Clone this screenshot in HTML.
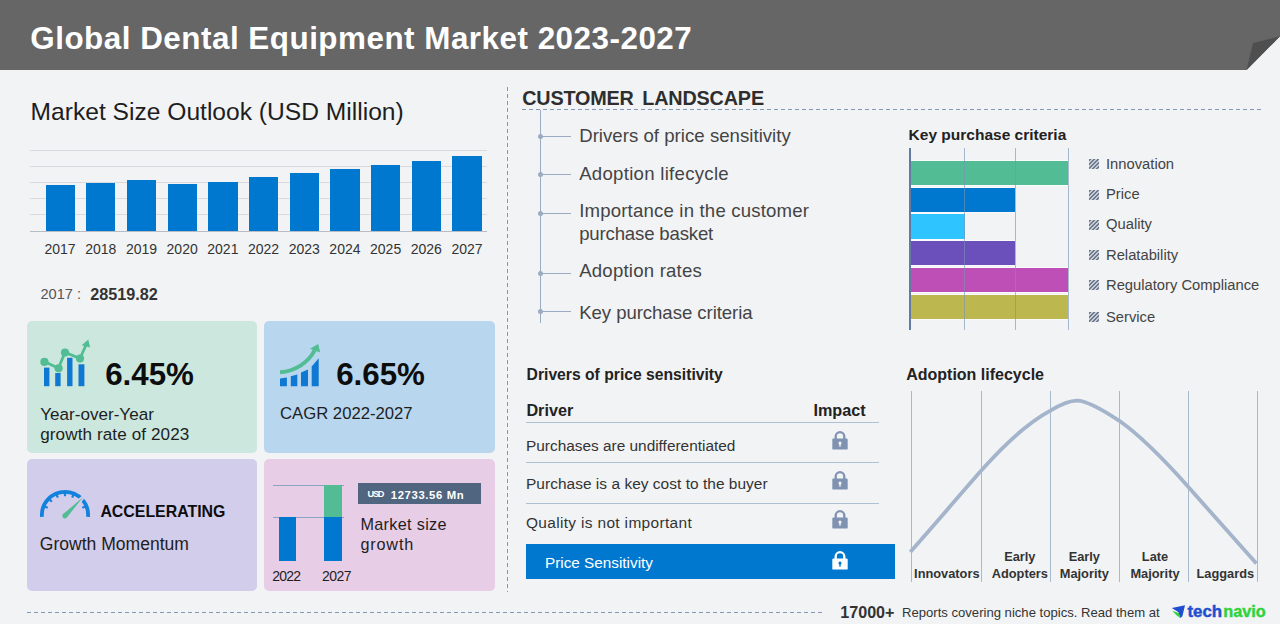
<!DOCTYPE html>
<html lang="en"><head><meta charset="utf-8"><title>Global Dental Equipment Market 2023-2027</title>
<style>
html,body{margin:0;padding:0;}
body{width:1280px;height:624px;position:relative;overflow:hidden;background:#f2f3f5;font-family:"Liberation Sans", sans-serif;}
.t{position:absolute;white-space:nowrap;font-family:"Liberation Sans", sans-serif;}
.r{position:absolute;display:block;}
.hatch{background:repeating-linear-gradient(135deg,#6f7b8c 0,#6f7b8c 1.45px,#c6ccd5 1.45px,#c6ccd5 2.9px);}
</style></head><body>
<div class="r" style="left:0;top:0;width:1280px;height:70px;background:#666666;clip-path:polygon(0 0,1280px 0,1280px 36.3px,1246.6px 70px,0 70px);"></div>
<svg class="r" style="left:1240px;top:30px" width="40" height="40" viewBox="1240 30 40 40"><polygon points="1246.6,70 1253,43 1280,36.3" fill="#4f4f4f"/></svg>
<div class="t" style="left:30.30px;top:23.02px;font-size:31.4px;line-height:31.4px;color:#ffffff;font-weight:bold;letter-spacing:0.5px;">Global Dental Equipment Market 2023-2027</div>
<div class="t" style="left:30.60px;top:99.78px;font-size:24.6px;line-height:24.6px;color:#1e1e1e;">Market Size Outlook (USD Million)</div>
<div class="r" style="left:30.00px;top:150.00px;width:457.00px;height:1.00px;background:#d9dadd;"></div>
<div class="r" style="left:30.00px;top:165.70px;width:457.00px;height:1.00px;background:#d9dadd;"></div>
<div class="r" style="left:30.00px;top:181.50px;width:457.00px;height:1.00px;background:#d9dadd;"></div>
<div class="r" style="left:30.00px;top:197.60px;width:457.00px;height:1.00px;background:#d9dadd;"></div>
<div class="r" style="left:30.00px;top:213.70px;width:457.00px;height:1.00px;background:#d9dadd;"></div>
<div class="r" style="left:45.50px;top:185.00px;width:29.30px;height:46.00px;background:#0078d0;"></div>
<div class="t" style="left:60.10px;top:241.55px;font-size:14px;line-height:14px;color:#333;transform:translateX(-50%);">2017</div>
<div class="r" style="left:86.19px;top:183.10px;width:29.30px;height:47.90px;background:#0078d0;"></div>
<div class="t" style="left:100.79px;top:241.55px;font-size:14px;line-height:14px;color:#333;transform:translateX(-50%);">2018</div>
<div class="r" style="left:126.88px;top:180.10px;width:29.30px;height:50.90px;background:#0078d0;"></div>
<div class="t" style="left:141.48px;top:241.55px;font-size:14px;line-height:14px;color:#333;transform:translateX(-50%);">2019</div>
<div class="r" style="left:167.57px;top:184.20px;width:29.30px;height:46.80px;background:#0078d0;"></div>
<div class="t" style="left:182.17px;top:241.55px;font-size:14px;line-height:14px;color:#333;transform:translateX(-50%);">2020</div>
<div class="r" style="left:208.26px;top:181.60px;width:29.30px;height:49.40px;background:#0078d0;"></div>
<div class="t" style="left:222.86px;top:241.55px;font-size:14px;line-height:14px;color:#333;transform:translateX(-50%);">2021</div>
<div class="r" style="left:248.95px;top:176.70px;width:29.30px;height:54.30px;background:#0078d0;"></div>
<div class="t" style="left:263.55px;top:241.55px;font-size:14px;line-height:14px;color:#333;transform:translateX(-50%);">2022</div>
<div class="r" style="left:289.64px;top:173.40px;width:29.30px;height:57.60px;background:#0078d0;"></div>
<div class="t" style="left:304.24px;top:241.55px;font-size:14px;line-height:14px;color:#333;transform:translateX(-50%);">2023</div>
<div class="r" style="left:330.33px;top:169.20px;width:29.30px;height:61.80px;background:#0078d0;"></div>
<div class="t" style="left:344.93px;top:241.55px;font-size:14px;line-height:14px;color:#333;transform:translateX(-50%);">2024</div>
<div class="r" style="left:371.02px;top:165.10px;width:29.30px;height:65.90px;background:#0078d0;"></div>
<div class="t" style="left:385.62px;top:241.55px;font-size:14px;line-height:14px;color:#333;transform:translateX(-50%);">2025</div>
<div class="r" style="left:411.71px;top:161.00px;width:29.30px;height:70.00px;background:#0078d0;"></div>
<div class="t" style="left:426.31px;top:241.55px;font-size:14px;line-height:14px;color:#333;transform:translateX(-50%);">2026</div>
<div class="r" style="left:452.40px;top:156.10px;width:29.30px;height:74.90px;background:#0078d0;"></div>
<div class="t" style="left:467.00px;top:241.55px;font-size:14px;line-height:14px;color:#333;transform:translateX(-50%);">2027</div>
<div class="r" style="left:30.00px;top:230.60px;width:457.00px;height:1.20px;background:#b9bcc4;"></div>
<div class="t" style="left:40.50px;top:287.04px;font-size:14.6px;line-height:14.6px;color:#555;">2017 :</div>
<div class="t" style="left:90.30px;top:285.69px;font-size:16.2px;line-height:16.2px;color:#333;font-weight:bold;">28519.82</div>
<div class="r" style="left:27.00px;top:321.00px;width:230.10px;height:132.20px;background:#cbe7de;border-radius:5px;"></div>
<div class="r" style="left:264.20px;top:321.00px;width:230.60px;height:132.20px;background:#b8d6ee;border-radius:5px;"></div>
<div class="r" style="left:27.00px;top:459.00px;width:230.40px;height:131.70px;background:#d2cdea;border-radius:5px;"></div>
<div class="r" style="left:264.20px;top:459.00px;width:230.40px;height:131.70px;background:#e8cde6;border-radius:5px;"></div>
<svg class="r" style="left:38px;top:336px" width="56" height="54" viewBox="38 336 56 54">
<g fill="#0f78d2"><rect x="44" y="367.6" width="5.4" height="18.6"/><rect x="55.2" y="373" width="5.4" height="13.2"/><rect x="67.1" y="357.8" width="5.4" height="28.4"/><rect x="78.5" y="364.3" width="5.9" height="21.9"/></g>
<polyline points="44.4,361.6 58.4,368.2 65,352.4 80,358.5 86,345" fill="none" stroke="#52bd94" stroke-width="2.8" stroke-linejoin="round"/>
<g fill="#52bd94"><circle cx="44.4" cy="361.9" r="4.1"/><circle cx="58.6" cy="368.3" r="4.1"/><circle cx="65" cy="352.5" r="4.1"/><circle cx="80" cy="358.6" r="4.1"/>
<polygon points="88.3,339.6 90.1,347.5 81.7,345.3"/></g></svg>
<div class="t" style="left:105.20px;top:358.80px;font-size:31.3px;line-height:31.3px;color:#0d0d0d;font-weight:bold;">6.45%</div>
<div class="t" style="left:40.20px;top:405.72px;font-size:17.1px;line-height:17.1px;color:#1e1e1e;">Year-over-Year</div>
<div class="t" style="left:40.20px;top:425.82px;font-size:17.1px;line-height:17.1px;color:#1e1e1e;letter-spacing:0.1px;">growth rate of 2023</div>
<svg class="r" style="left:274px;top:338px" width="52" height="52" viewBox="274 338 52 52">
<g fill="#0f78d2"><polygon points="280,378.4 286.9,377.4 286.9,386.2 280,386.2"/><polygon points="290.8,376.2 297.3,374.6 297.3,386.2 290.8,386.2"/><polygon points="301,372.6 308,369.6 308,386.2 301,386.2"/><polygon points="311.7,366.6 318.7,358.2 318.7,386.2 311.7,386.2"/></g>
<path d="M280 372.3 C295 371.2 308 363 314.8 350.2" fill="none" stroke="#52bd94" stroke-width="3.9"/>
<polygon points="318.2,344 320.2,352.6 310,348.7" fill="#52bd94"/></svg>
<div class="t" style="left:336.20px;top:358.80px;font-size:31.3px;line-height:31.3px;color:#0d0d0d;font-weight:bold;">6.65%</div>
<div class="t" style="left:280.00px;top:405.56px;font-size:16.7px;line-height:16.7px;color:#1e1e1e;">CAGR 2022-2027</div>
<svg class="r" style="left:36px;top:484px" width="60" height="38" viewBox="36 484 60 38">
<path d="M41.98 516.8 A23.1 23.1 0 1 1 88.02 516.8" fill="none" stroke="#1382dd" stroke-width="3.8"/>
<g stroke="#1382dd" stroke-width="2.2"><line x1="85.33" y1="506.48" x2="82.28" y2="507.74"/><line x1="73.42" y1="494.57" x2="72.16" y2="497.62"/><line x1="65.00" y1="492.90" x2="65.00" y2="496.20"/><line x1="56.58" y1="494.57" x2="57.84" y2="497.62"/><line x1="49.44" y1="499.34" x2="51.78" y2="501.68"/><line x1="44.67" y1="506.48" x2="47.72" y2="507.74"/></g>
<polygon points="62.9,514.3 83.2,497 66.5,517.9" fill="#52bd94" stroke="#d2cdea" stroke-width="3.6" stroke-linejoin="round"/>
<polygon points="62.9,514.3 83.2,497 66.5,517.9" fill="#52bd94"/><circle cx="64.7" cy="516" r="2.4" fill="#52bd94"/></svg>
<div class="t" style="left:100.40px;top:503.94px;font-size:15.9px;line-height:15.9px;color:#0d0d0d;font-weight:bold;">ACCELERATING</div>
<div class="t" style="left:39.80px;top:535.84px;font-size:17.55px;line-height:17.55px;color:#1e1e1e;">Growth Momentum</div>
<div class="r" style="left:273.00px;top:484.90px;width:71.00px;height:1.00px;background:#8aa3c0;"></div>
<div class="r" style="left:273.00px;top:517.00px;width:71.00px;height:1.00px;background:#8aa3c0;"></div>
<div class="r" style="left:279.20px;top:517.40px;width:17.30px;height:43.80px;background:#0078d0;"></div>
<div class="r" style="left:324.40px;top:517.40px;width:17.30px;height:43.80px;background:#0078d0;"></div>
<div class="r" style="left:324.40px;top:485.30px;width:17.30px;height:32.20px;background:#52bd94;"></div>
<div class="t" style="left:272.20px;top:568.75px;font-size:14px;line-height:14px;color:#1e1e1e;letter-spacing:-0.8px;">2022</div>
<div class="t" style="left:322.00px;top:568.75px;font-size:14px;line-height:14px;color:#1e1e1e;letter-spacing:-0.55px;">2027</div>
<div class="r" style="left:358.20px;top:483.20px;width:122.80px;height:20.50px;background:#4f6580;"></div>
<div class="t" style="left:367.40px;top:489.51px;font-size:9.2px;line-height:9.2px;color:#fff;font-weight:bold;letter-spacing:-1.15px;">USD</div>
<div class="t" style="left:390.80px;top:489.73px;font-size:11.3px;line-height:11.3px;color:#fff;font-weight:bold;letter-spacing:0.62px;">12733.56 Mn</div>
<div class="t" style="left:360.40px;top:515.79px;font-size:16.2px;line-height:16.2px;color:#1e1e1e;letter-spacing:0.34px;">Market size</div>
<div class="t" style="left:360.40px;top:535.99px;font-size:16.2px;line-height:16.2px;color:#1e1e1e;letter-spacing:0.85px;">growth</div>
<div class="r" style="left:507px;top:87.3px;width:1px;height:504.3px;background:repeating-linear-gradient(180deg,#8197b3 0,#8197b3 4px,transparent 4px,transparent 7px);"></div>
<div class="r" style="left:27px;top:611.5px;width:796px;height:1px;background:repeating-linear-gradient(90deg,#8197b3 0,#8197b3 4px,transparent 4px,transparent 7px);"></div>
<div class="t" style="left:522.20px;top:89.24px;font-size:19.8px;line-height:19.8px;color:#2e2e2e;font-weight:bold;letter-spacing:-0.16px;word-spacing:3.2px;">CUSTOMER LANDSCAPE</div>
<div class="r" style="left:522px;top:108.8px;width:740.4px;height:1px;background:repeating-linear-gradient(90deg,#8197b3 0,#8197b3 4px,transparent 4px,transparent 7px);"></div>
<div class="r" style="left:540.00px;top:110.00px;width:1.00px;height:212.50px;background:#9aabc2;"></div>
<div class="r" style="left:540.00px;top:136.10px;width:31.00px;height:1.00px;background:#9aabc2;"></div>
<div class="r" style="left:537.80px;top:134.10px;width:5.00px;height:5.00px;background:#9aabc2;border-radius:50%;"></div>
<div class="r" style="left:540.00px;top:173.90px;width:31.00px;height:1.00px;background:#9aabc2;"></div>
<div class="r" style="left:537.80px;top:171.90px;width:5.00px;height:5.00px;background:#9aabc2;border-radius:50%;"></div>
<div class="r" style="left:540.00px;top:212.90px;width:31.00px;height:1.00px;background:#9aabc2;"></div>
<div class="r" style="left:537.80px;top:210.90px;width:5.00px;height:5.00px;background:#9aabc2;border-radius:50%;"></div>
<div class="r" style="left:540.00px;top:272.80px;width:31.00px;height:1.00px;background:#9aabc2;"></div>
<div class="r" style="left:537.80px;top:270.80px;width:5.00px;height:5.00px;background:#9aabc2;border-radius:50%;"></div>
<div class="r" style="left:540.00px;top:310.50px;width:31.00px;height:1.00px;background:#9aabc2;"></div>
<div class="r" style="left:537.80px;top:308.50px;width:5.00px;height:5.00px;background:#9aabc2;border-radius:50%;"></div>
<div class="t" style="left:579.20px;top:127.26px;font-size:18.6px;line-height:18.6px;color:#444;letter-spacing:0.03px;">Drivers of price sensitivity</div>
<div class="t" style="left:579.20px;top:165.06px;font-size:18.6px;line-height:18.6px;color:#444;letter-spacing:0.28px;">Adoption lifecycle</div>
<div class="t" style="left:579.20px;top:202.46px;font-size:18.6px;line-height:18.6px;color:#444;letter-spacing:0.18px;">Importance in the customer</div>
<div class="t" style="left:579.20px;top:224.96px;font-size:18.6px;line-height:18.6px;color:#444;letter-spacing:-0.17px;">purchase basket</div>
<div class="t" style="left:579.20px;top:262.26px;font-size:18.6px;line-height:18.6px;color:#444;letter-spacing:0.21px;">Adoption rates</div>
<div class="t" style="left:579.20px;top:303.86px;font-size:18.6px;line-height:18.6px;color:#444;letter-spacing:-0.06px;">Key purchase criteria</div>
<div class="t" style="left:908.60px;top:126.58px;font-size:15.5px;line-height:15.5px;color:#222;font-weight:bold;">Key purchase criteria</div>
<div class="r" style="left:910.00px;top:160.80px;width:158.40px;height:24.30px;background:#52bd94;box-shadow:0 0 0 1px #fbfbfc;"></div>
<div class="r" style="left:910.00px;top:187.55px;width:105.40px;height:24.30px;background:#0078d0;box-shadow:0 0 0 1px #fbfbfc;"></div>
<div class="r" style="left:910.00px;top:214.30px;width:54.50px;height:24.30px;background:#2ec4ff;box-shadow:0 0 0 1px #fbfbfc;"></div>
<div class="r" style="left:910.00px;top:241.05px;width:105.40px;height:24.30px;background:#6b4fbb;box-shadow:0 0 0 1px #fbfbfc;"></div>
<div class="r" style="left:910.00px;top:267.80px;width:158.40px;height:24.30px;background:#bd4fb6;box-shadow:0 0 0 1px #fbfbfc;"></div>
<div class="r" style="left:910.00px;top:294.55px;width:158.40px;height:24.30px;background:#bdb74f;box-shadow:0 0 0 1px #fbfbfc;"></div>
<div class="r" style="left:963.90px;top:148.00px;width:1.00px;height:181.50px;background:rgba(120,145,180,.62);"></div>
<div class="r" style="left:1014.90px;top:148.00px;width:1.00px;height:181.50px;background:rgba(120,145,180,.62);"></div>
<div class="r" style="left:1067.80px;top:148.00px;width:1.00px;height:181.50px;background:rgba(120,145,180,.62);"></div>
<div class="r" style="left:909.20px;top:148.00px;width:1.80px;height:181.50px;background:#5f7da3;"></div>
<div class="r hatch" style="left:1089px;top:159px;width:10px;height:10px;"></div>
<div class="t" style="left:1106.00px;top:156.61px;font-size:14.75px;line-height:14.75px;color:#444;">Innovation</div>
<div class="r hatch" style="left:1089px;top:189.5px;width:10px;height:10px;"></div>
<div class="t" style="left:1106.00px;top:186.91px;font-size:14.75px;line-height:14.75px;color:#444;">Price</div>
<div class="r hatch" style="left:1089px;top:219.5px;width:10px;height:10px;"></div>
<div class="t" style="left:1106.00px;top:216.71px;font-size:14.75px;line-height:14.75px;color:#444;">Quality</div>
<div class="r hatch" style="left:1089px;top:250px;width:10px;height:10px;"></div>
<div class="t" style="left:1106.00px;top:247.71px;font-size:14.75px;line-height:14.75px;color:#444;">Relatability</div>
<div class="r hatch" style="left:1089px;top:280px;width:10px;height:10px;"></div>
<div class="t" style="left:1106.00px;top:277.51px;font-size:14.75px;line-height:14.75px;color:#444;">Regulatory Compliance</div>
<div class="r hatch" style="left:1089px;top:311.5px;width:10px;height:10px;"></div>
<div class="t" style="left:1106.00px;top:309.61px;font-size:14.75px;line-height:14.75px;color:#444;">Service</div>
<div class="t" style="left:526.60px;top:366.71px;font-size:15.7px;line-height:15.7px;color:#222;font-weight:bold;">Drivers of price sensitivity</div>
<div class="t" style="left:526.40px;top:402.29px;font-size:16.2px;line-height:16.2px;color:#222;font-weight:bold;">Driver</div>
<div class="t" style="left:813.40px;top:402.29px;font-size:16.2px;line-height:16.2px;color:#222;font-weight:bold;">Impact</div>
<div class="r" style="left:526.00px;top:422.20px;width:353.00px;height:1.00px;background:#b0c0d4;"></div>
<div class="r" style="left:526.00px;top:462.00px;width:353.00px;height:1.00px;background:#b0c0d4;"></div>
<div class="r" style="left:526.00px;top:502.50px;width:353.00px;height:1.00px;background:#b0c0d4;"></div>
<div class="r" style="left:526.00px;top:543.60px;width:369.00px;height:35.00px;background:#0078d0;"></div>
<div class="t" style="left:526.00px;top:437.66px;font-size:15.4px;line-height:15.4px;color:#333;">Purchases are undifferentiated</div>
<div class="t" style="left:526.00px;top:475.92px;font-size:15.45px;line-height:15.45px;color:#333;letter-spacing:0.04px;">Purchase is a key cost to the buyer</div>
<div class="t" style="left:526.00px;top:514.82px;font-size:15.45px;line-height:15.45px;color:#333;letter-spacing:0.34px;">Quality is not important</div>
<div class="t" style="left:545.00px;top:554.95px;font-size:15.3px;line-height:15.3px;color:#fff;">Price Sensitivity</div>
<svg class="r" style="left:832.3px;top:431.4px" width="16" height="19" viewBox="0 0 16 19">
<path d="M3.7 8.2V5.5a4.3 4.3 0 0 1 8.6 0V8.2" fill="none" stroke="#8092b1" stroke-width="2.3"/>
<rect x="0.3" y="7.6" width="15.4" height="11" rx="1.2" fill="#8092b1"/>
<circle cx="8" cy="12.1" r="1.55" fill="#f2f3f5"/><rect x="7.3" y="12.6" width="1.4" height="3.1" fill="#f2f3f5"/></svg>
<svg class="r" style="left:832.3px;top:471.4px" width="16" height="19" viewBox="0 0 16 19">
<path d="M3.7 8.2V5.5a4.3 4.3 0 0 1 8.6 0V8.2" fill="none" stroke="#8092b1" stroke-width="2.3"/>
<rect x="0.3" y="7.6" width="15.4" height="11" rx="1.2" fill="#8092b1"/>
<circle cx="8" cy="12.1" r="1.55" fill="#f2f3f5"/><rect x="7.3" y="12.6" width="1.4" height="3.1" fill="#f2f3f5"/></svg>
<svg class="r" style="left:832.3px;top:509.6px" width="16" height="19" viewBox="0 0 16 19">
<path d="M3.7 8.2V5.5a4.3 4.3 0 0 1 8.6 0V8.2" fill="none" stroke="#8092b1" stroke-width="2.3"/>
<rect x="0.3" y="7.6" width="15.4" height="11" rx="1.2" fill="#8092b1"/>
<circle cx="8" cy="12.1" r="1.55" fill="#f2f3f5"/><rect x="7.3" y="12.6" width="1.4" height="3.1" fill="#f2f3f5"/></svg>
<svg class="r" style="left:832.3px;top:551px" width="16" height="19" viewBox="0 0 16 19">
<path d="M3.7 8.2V5.5a4.3 4.3 0 0 1 8.6 0V8.2" fill="none" stroke="#ffffff" stroke-width="2.3"/>
<rect x="0.3" y="7.6" width="15.4" height="11" rx="1.2" fill="#ffffff"/>
<circle cx="8" cy="12.1" r="1.55" fill="#0078d0"/><rect x="7.3" y="12.6" width="1.4" height="3.1" fill="#0078d0"/></svg>
<div class="t" style="left:906.20px;top:366.76px;font-size:16px;line-height:16px;color:#222;font-weight:bold;">Adoption lifecycle</div>
<div class="r" style="left:910.50px;top:391.30px;width:1.00px;height:190.70px;background:#a9bace;"></div>
<div class="r" style="left:981.00px;top:391.30px;width:1.00px;height:190.70px;background:#a9bace;"></div>
<div class="r" style="left:1049.90px;top:391.30px;width:1.00px;height:190.70px;background:#a9bace;"></div>
<div class="r" style="left:1118.80px;top:391.30px;width:1.00px;height:190.70px;background:#a9bace;"></div>
<div class="r" style="left:1188.10px;top:391.30px;width:1.00px;height:190.70px;background:#a9bace;"></div>
<div class="r" style="left:1256.70px;top:391.30px;width:1.00px;height:190.70px;background:#a9bace;"></div>
<svg class="r" style="left:900px;top:390px" width="370" height="185" viewBox="900 390 370 185">
<path d="M910.3 552 C940 518.6 960 494.6 981.5 470.3 C1006 442.6 1030 421.6 1050.4 410.6 C1062 403.6 1070 400.6 1077 400.6 C1086 400.6 1100 408 1119.3 420.8 C1143 437.5 1168 464 1188.6 487.2 C1212 513.8 1236 540.6 1256.4 563.6" fill="none" stroke="#a3b4cb" stroke-width="3.8" stroke-linecap="butt"/></svg>
<div class="t" style="left:946.80px;top:567.96px;font-size:12.8px;line-height:12.8px;color:#333;font-weight:bold;transform:translateX(-50%);">Innovators</div>
<div class="t" style="left:1019.80px;top:551.26px;font-size:12.8px;line-height:12.8px;color:#333;font-weight:bold;transform:translateX(-50%);">Early</div>
<div class="t" style="left:1019.80px;top:567.96px;font-size:12.8px;line-height:12.8px;color:#333;font-weight:bold;transform:translateX(-50%);">Adopters</div>
<div class="t" style="left:1084.30px;top:551.26px;font-size:12.8px;line-height:12.8px;color:#333;font-weight:bold;transform:translateX(-50%);">Early</div>
<div class="t" style="left:1084.30px;top:567.96px;font-size:12.8px;line-height:12.8px;color:#333;font-weight:bold;transform:translateX(-50%);">Majority</div>
<div class="t" style="left:1155.00px;top:551.26px;font-size:12.8px;line-height:12.8px;color:#333;font-weight:bold;transform:translateX(-50%);">Late</div>
<div class="t" style="left:1155.00px;top:567.96px;font-size:12.8px;line-height:12.8px;color:#333;font-weight:bold;transform:translateX(-50%);">Majority</div>
<div class="t" style="left:1225.30px;top:567.96px;font-size:12.8px;line-height:12.8px;color:#333;font-weight:bold;transform:translateX(-50%);">Laggards</div>
<div class="t" style="left:840.30px;top:603.67px;font-size:16.1px;line-height:16.1px;color:#333;font-weight:bold;">17000+</div>
<div class="t" style="left:902.00px;top:606.21px;font-size:13.1px;line-height:13.1px;color:#333;">Reports covering niche topics. Read them at</div>
<svg class="r" style="left:1168px;top:600px" width="104" height="22" viewBox="1168 600 104 22">
<polygon points="1171.8,608 1185,605.2 1182.4,616.2 1180.4,617.9 1178.2,611.9" fill="#1f4fd0"/>
<polygon points="1172.2,610.8 1178.6,613 1180.4,617.9 1176.8,615.4" fill="#30d23a"/>
<text x="1187.4" y="616.8" font-family='"Liberation Sans", sans-serif' font-weight="bold" font-size="15.6" textLength="34.7" lengthAdjust="spacingAndGlyphs" fill="#1f4fd0" stroke="#1f4fd0" stroke-width="0.4">tech</text>
<text x="1223.2" y="616.8" font-family='"Liberation Sans", sans-serif' font-weight="bold" font-size="15.6" textLength="42.6" lengthAdjust="spacingAndGlyphs" fill="#30d23a" stroke="#30d23a" stroke-width="0.4">navio</text></svg>
</body></html>
